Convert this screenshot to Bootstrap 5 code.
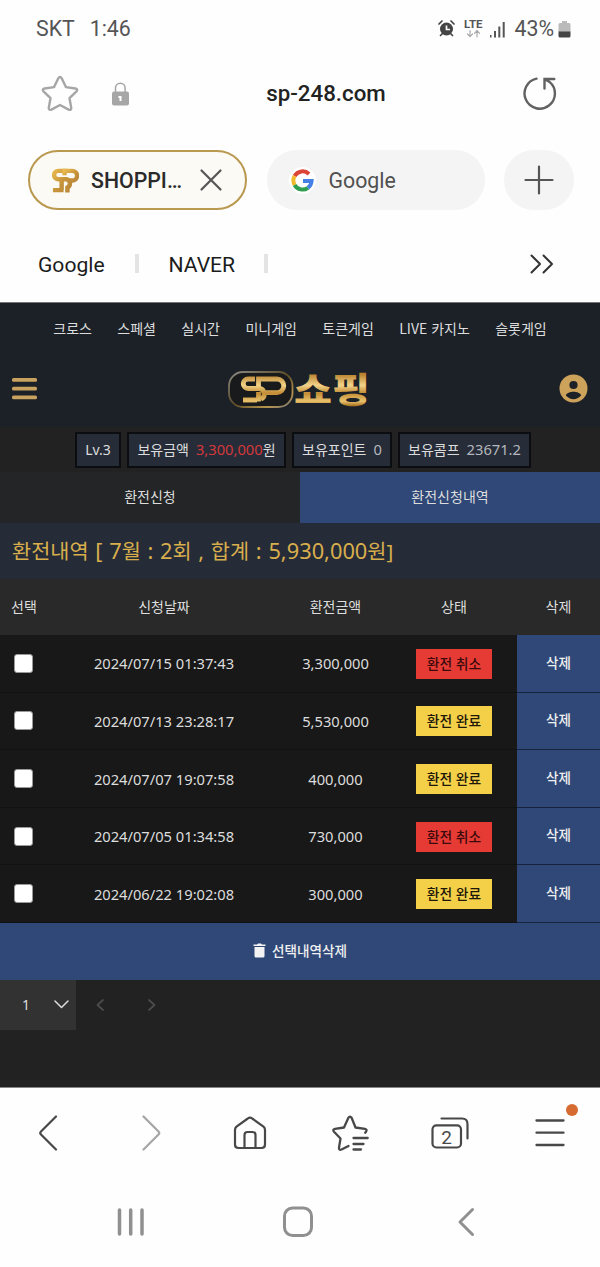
<!DOCTYPE html>
<html lang="ko">
<head>
<meta charset="utf-8">
<meta name="viewport" content="width=device-width, initial-scale=1">
<title>SP 쇼핑</title>
<link href="https://cdn.jsdelivr.net/npm/bootstrap@5.3.0/dist/css/bootstrap.min.css" rel="stylesheet">
<style>
body{width:600px;height:1267px;overflow:hidden;background:#fefefe;font-family:Roboto,"Noto Sans CJK KR",sans-serif;color:#222;line-height:1.2}
svg{display:block;flex:none}
.ln{fill:none;stroke:currentColor;stroke-linecap:round;stroke-linejoin:round}
.status-bar{height:56px;padding:1px 29px 0 36px;font-size:21.3px;color:#555}
.url-bar{height:74px;padding:1px 42px 0 41px;font-size:22.3px}
.tab-strip{height:100px;padding:0 26px 0 28px;font-size:21.3px}
.tab-pill{height:60px;border-radius:30px;background:#f4f4f4;width:218px}
.tab-pill.current{border:2px solid #b9984f;background:#fcfaf5;width:219px}
.tab-new{width:70px;height:60px;border-radius:35px;background:#f4f4f4;color:#555}
.marks{height:72px;padding:0 46px 5px 38px;font-size:21.1px;color:#1c1c1c}
.sep{width:4px;height:19px;background:#e4e4e4}
.site{height:786px;background:#222;color:#ddd;font-family:"Noto Sans","Noto Sans CJK KR",sans-serif;border-top:1px solid #777;border-bottom:1px solid #888;font-size:14px}
.site-head{height:124px;background:#1c2128}
.site-nav{height:50px;gap:25.400px;font-family:"Noto Sans CJK KR",sans-serif}
.brand{padding:0 12px;height:71px}
.num{font-family:"Noto Sans",sans-serif;font-size:14.7px}
.info{height:45px;gap:6px;padding:1px 0 0 6px}
.chip{height:36px;border:2px solid #0b0d11;background:#262c38;white-space:nowrap}
.chip .num{color:#b4b7bd}
.chip .hot{color:#d3383b}
.switch{height:51px}
.switch .on{background:#2f4878}
.switch .off{background:#232526}
.summary{height:56px;background:#252c38;color:#d9ae4c;font-size:20.8px;padding:1px 0 0 12px;white-space:pre;word-spacing:1.200px}
.summary .num{font-size:21.8px}
.log{table-layout:fixed;margin:0;border-collapse:separate;border-spacing:0;text-align:center;line-height:1}
.log th{height:56px;background:#292929;font-weight:400;padding:0;vertical-align:middle}
.log td{height:57.6px;background:#181818;border-bottom:1px solid #101216;padding:1px 0 0;vertical-align:middle}
.log td.del{background:#2f4878;border-bottom-color:#15233c;color:#f0f0f0;font-weight:500;font-size:13.5px;padding-bottom:1px}
.log .form-check-input{width:19px;height:19px;border:1px solid #999;border-radius:3px;background:#fff;display:block;margin:0 auto 1px 14px}
.state{display:inline-flex;align-items:center;justify-content:center;width:76px;height:30px;background:#f4cf48;color:#1d1808;font-weight:500;font-size:13.8px}
.state.cancel{background:#e63b35;color:#3c0a0b}
.wipe{height:57px;background:#2f4878;color:#f0f0f0;font-size:13.6px;font-weight:500;gap:6px;padding-bottom:1px}
.pager{height:50px}
.pager .sel{width:76px;background:#323232;padding:0 7px 0 22px}
.tools{height:90px;color:#484848}
.sys{height:87px;color:#909090}
.dot{position:absolute;left:31px;top:-14px;width:12px;height:12px;border-radius:50%;background:#d66b31}
</style>
</head>
<body>
<div class="status-bar d-flex align-items-center">
  <span>SKT</span><span style="margin-left:15px">1:46</span>
  <svg class="ms-auto" width="17" height="17" viewBox="0 0 17 17"><path d="M2.500 15.500l2-2M14.500 15.500l-2-2M1 4l3-3M16 4l-3-3" stroke="#444" stroke-width="1.700" stroke-linecap="round"/><circle cx="8.500" cy="9" r="6.500" fill="#444"/><path d="M8.500 5.500V9.500H12" stroke="#fff" stroke-width="1.700" fill="none"/></svg>
  <svg style="margin-left:9px" width="19" height="19" viewBox="0 0 19 19"><text x="0" y="8.800" font-family="Roboto" font-weight="700" font-size="11" fill="#555" textLength="18.500" lengthAdjust="spacingAndGlyphs">LTE</text><path class="ln" style="color:#aaa" stroke-width="1.200" d="M6 11.500v6M3.500 15l2.500 2.700L8.500 15M13 18v-6M10.500 14.300L13 11.500l2.500 2.800"/></svg>
  <svg style="margin-left:7px" width="15" height="18" viewBox="0 0 15 18" fill="#555"><path d="M0 15h1.500v2.500H0zM4 11h2v6.500H4zM8.300 6.500h2v11h-2zM12.700 2h2v15.500h-2z"/></svg>
  <span style="margin-left:9px">43%</span>
  <svg style="margin-left:4px" width="13" height="18" viewBox="0 0 13 18"><path d="M4 1h5v2h2a1.500 1.500 0 0 1 1.500 1.500V12H.500V4.500A1.500 1.500 0 0 1 2 3h2z" fill="#bbb"/><path d="M.500 11.500h12V16a1.500 1.500 0 0 1-1.500 1.500H2A1.500 1.500 0 0 1 .500 16z" fill="#444"/></svg>
</div>

<div class="url-bar d-flex align-items-center">
  <svg width="38" height="38" viewBox="0 0 38 38" style="color:#a6a6a6"><path class="ln" stroke-width="2.400" d="M17.300 3.300q1.700-2.600 3.400 0l4.200 8.800 9.600 1.400q2.800.700 1 2.800l-7 6.800 1.700 9.600q.100 3-2.600 1.900L19 30l-8.600 4.600q-2.700 1-2.600-1.900l1.700-9.600-7-6.800q-1.800-2.100 1-2.800l9.600-1.400z"/></svg>
  <svg style="margin-left:32px;color:#a6a6a6" width="19" height="24" viewBox="0 0 19 24"><path class="ln" stroke-width="1.500" d="M4.500 10V6a4.800 4.800 0 0 1 9.600 0v4"/><rect x="1" y="9.500" width="17" height="14" rx="2" fill="#a6a6a6"/><path d="M7.500 14h3v5H8.500v-3h-1z" fill="#fff"/></svg>
  <span class="mx-auto" style="font-weight:500">sp-248.com</span>
  <svg width="36" height="36" viewBox="0 0 36 36" style="color:#626262"><path fill="none" stroke="currentColor" stroke-width="2.400" stroke-linecap="round" d="M14.500 2.600A15.200 15.200 0 1 0 27.500 5.800M22.500 12.500V3H32.300M22.800 3.200L28 6.300"/></svg>
</div>

<div class="tab-strip d-flex align-items-center justify-content-between">
  <div class="tab-pill current d-flex align-items-center">
    <svg style="margin-left:22px" width="27" height="29" viewBox="0 0 28 29"><defs><linearGradient id="g1" x1="0" y1="0" x2="1" y2="1"><stop offset="0" stop-color="#e8b94f"/><stop offset=".500" stop-color="#c8953c"/><stop offset="1" stop-color="#b98738"/></linearGradient></defs><g fill="none" stroke="url(#g1)" stroke-width="4.600"><path d="M16 4.500H6.500a4.300 4.300 0 0 0 0 8.700H15a4.500 4.500 0 0 1 1 8.500V27M1 24.500h11M10 24V15"/><path d="M13 9V4.500h8a4.800 4.800 0 0 1 0 10h-5"/></g></svg>
    <span style="font-weight:500;margin-left:12px;width:91px;white-space:nowrap;color:#2a2a2a;padding-top:2px">SHOPPI…</span>
    <svg style="margin-left:17px;color:#555" width="24" height="24" viewBox="0 0 24 24"><path class="ln" stroke-width="2.200" d="M2.500 2.500l19 19M21.500 2.500l-19 19"/></svg>
  </div>
  <div class="tab-pill d-flex align-items-center">
    <svg style="margin-left:22px" width="27" height="27" viewBox="0 0 27 27"><circle cx="13.500" cy="13.500" r="13.500" fill="#fff"/><g fill="none" stroke-width="4"><path d="M20 7A9.200 9.200 0 0 0 5.600 9" stroke="#dc4437"/><path d="M5.600 9a9.200 9.200 0 0 0 0 9" stroke="#f2b92a"/><path d="M5.600 18A9.200 9.200 0 0 0 19 20.800" stroke="#2f9e4e"/><path d="M19 20.800a9.200 9.200 0 0 0 3.600-6.800H14" stroke="#4580e6"/></g></svg>
    <span style="margin-left:13px;color:#505050;padding-top:2px">Google</span>
  </div>
  <div class="tab-new d-flex align-items-center justify-content-center"><svg width="30" height="30" viewBox="0 0 30 30"><path class="ln" stroke-width="2.200" d="M15 1.500v27M1.500 15h27"/></svg></div>
</div>

<div class="marks d-flex align-items-center">
  <span style="padding-top:2px">Google</span><i class="sep" style="margin-left:30px"></i>
  <span style="margin-left:30px;padding-top:2px">NAVER</span><i class="sep" style="margin-left:29px"></i>
  <svg class="ms-auto" width="24" height="20" viewBox="0 0 24 20" style="color:#333"><path class="ln" stroke-width="2" d="M1.500 1.500L10 10l-8.500 8.500M13.500 1.500L22 10l-8.500 8.500"/></svg>
</div>

<main class="site">
  <header class="site-head">
    <nav class="site-nav d-flex align-items-center justify-content-center"><span>크로스</span><span>스페셜</span><span>실시간</span><span>미니게임</span><span>토큰게임</span><span>LIVE 카지노</span><span>슬롯게임</span></nav>
    <div class="brand d-flex align-items-center justify-content-between">
      <svg width="26" height="24" viewBox="0 0 26 24"><g fill="#c9a260"><rect y="1" width="25" height="3.800" rx="1.500"/><rect y="9.700" width="25" height="3.800" rx="1.500"/><rect y="18.400" width="25" height="3.800" rx="1.500"/></g></svg>
      <svg width="144" height="60" viewBox="-1 -11 144 60"><defs><linearGradient id="g2" x1="0" y1="0" x2="1" y2="1"><stop offset="0" stop-color="#8b8b86"/><stop offset=".500" stop-color="#5d4c27"/><stop offset=".800" stop-color="#b7954d"/><stop offset="1" stop-color="#777"/></linearGradient><linearGradient id="g3" gradientUnits="userSpaceOnUse" x1="0" y1="4" x2="0" y2="36"><stop offset="0" stop-color="#b7802b"/><stop offset=".350" stop-color="#f3d489"/><stop offset=".600" stop-color="#c28b34"/><stop offset=".850" stop-color="#e9c26d"/><stop offset="1" stop-color="#a8701f"/></linearGradient></defs>
        <rect x="1" y="2" width="63.500" height="35" rx="14" fill="#191a1b" stroke="url(#g2)" stroke-width="1.800"/>
        <g fill="none" stroke="url(#g3)" stroke-width="4.800"><path d="M27 9H20a4.500 4.500 0 0 0 0 9.500H31a5.500 5.500 0 0 1 2 10.500M15 30h14M30.500 22v9.500"/><path d="M30.500 18V9H49a6.800 6.800 0 0 1 0 13.600H38"/></g>
        <text x="66" y="32.500" font-family="Noto Sans CJK KR" font-weight="900" font-size="35" textLength="76" lengthAdjust="spacingAndGlyphs" fill="url(#g3)">쇼핑</text></svg>
      <svg width="29" height="29" viewBox="0 0 29 29"><circle cx="14.500" cy="14.500" r="14" fill="#cda25a"/><circle cx="14.500" cy="11" r="4.100" fill="#1c2128"/><path d="M6.800 21.500c1.700-5 13.700-5 15.400 0q-3.500 3.700-7.700 3.700t-7.700-3.700z" fill="#1c2128"/></svg>
    </div>
  </header>
  <div class="info d-flex align-items-center justify-content-center">
    <div class="chip d-flex align-items-center justify-content-center" style="width:46px">Lv.3</div>
    <div class="chip d-flex align-items-center justify-content-center" style="width:159px">보유금액<span class="num hot" style="margin-left:7px">3,300,000</span>원</div>
    <div class="chip d-flex align-items-center justify-content-center" style="width:100px">보유포인트<span class="num" style="margin-left:7px">0</span></div>
    <div class="chip d-flex align-items-center justify-content-center" style="width:133px">보유콤프<span class="num" style="margin-left:7px">23671.2</span></div>
  </div>
  <div class="switch row g-0 text-center">
    <div class="off col-6 d-flex align-items-center justify-content-center">환전신청</div>
    <div class="on col-6 d-flex align-items-center justify-content-center">환전신청내역</div>
  </div>
  <div class="summary d-flex align-items-center"><div>환전내역 <span class="num">[ 7</span>월 <span class="num">: 2</span>회 <span class="num">,</span> 합계 <span class="num">: 5,930,000</span>원]</div></div>
  <table class="log w-100">
    <colgroup><col style="width:48px"><col style="width:232px"><col style="width:111px"><col style="width:126px"><col style="width:83px"></colgroup>
    <thead><tr><th>선택</th><th>신청날짜</th><th>환전금액</th><th>상태</th><th>삭제</th></tr></thead>
    <tbody>
      <tr><td><input class="form-check-input" type="checkbox"></td><td class="num">2024/07/15 01:37:43</td><td class="num">3,300,000</td><td><span class="state cancel">환전 취소</span></td><td class="del">삭제</td></tr>
      <tr><td><input class="form-check-input" type="checkbox"></td><td class="num">2024/07/13 23:28:17</td><td class="num">5,530,000</td><td><span class="state">환전 완료</span></td><td class="del">삭제</td></tr>
      <tr><td><input class="form-check-input" type="checkbox"></td><td class="num">2024/07/07 19:07:58</td><td class="num">400,000</td><td><span class="state">환전 완료</span></td><td class="del">삭제</td></tr>
      <tr><td><input class="form-check-input" type="checkbox"></td><td class="num">2024/07/05 01:34:58</td><td class="num">730,000</td><td><span class="state cancel">환전 취소</span></td><td class="del">삭제</td></tr>
      <tr><td><input class="form-check-input" type="checkbox"></td><td class="num">2024/06/22 19:02:08</td><td class="num">300,000</td><td><span class="state">환전 완료</span></td><td class="del">삭제</td></tr>
    </tbody>
  </table>
  <div class="wipe d-flex align-items-center justify-content-center"><svg width="13" height="15" viewBox="0 0 13 15" fill="#f4f4f4"><path d="M.500 1.500H4L5 .500h3l1 1h3.500V3H.500zM1.500 4h10v9a1.500 1.500 0 0 1-1.500 1.500H3A1.500 1.500 0 0 1 1.500 13z"/></svg><span>선택내역삭제</span></div>
  <div class="pager d-flex">
    <div class="sel d-flex align-items-center justify-content-between"><span class="num" style="font-size:14px">1</span><svg width="15" height="9" viewBox="0 0 15 9"><path class="ln" stroke-width="1.500" d="M1 1l6.500 6.500L14 1"/></svg></div>
    <div class="d-flex align-items-center" style="color:#4c4c4c;padding-left:20px;gap:44px"><svg width="8" height="12" viewBox="0 0 8 12"><path class="ln" stroke-width="1.700" d="M7 1L1.500 6 7 11"/></svg><svg width="8" height="12" viewBox="0 0 8 12"><path class="ln" stroke-width="1.700" d="M1 1l5.500 5L1 11"/></svg></div>
  </div>
</main>

<div class="tools row row-cols-6 g-0 align-items-center">
  <div class="col d-flex justify-content-center"><svg class="me-1" width="20" height="36" viewBox="0 0 20 36"><path class="ln" stroke-width="2.200" d="M18 1.500L3 16.500q-1.500 1.500 0 3L18 34.500"/></svg></div>
  <div class="col d-flex justify-content-center" style="color:#a5a5a5"><svg class="ms-1" width="20" height="36" viewBox="0 0 20 36"><path class="ln" stroke-width="2.200" d="M1.500 1.500l15 15q1.500 1.500 0 3l-15 15"/></svg></div>
  <div class="col d-flex justify-content-center"><svg width="34" height="34" viewBox="0 0 34 34"><path class="ln" stroke-width="2.200" d="M2 14q0-2 1.500-3.300L14.800 2.500q2.200-1.700 4.400 0l11.300 8.200q1.500 1.300 1.500 3.300v14.500q0 3.500-3.500 3.500h-23q-3.500 0-3.500-3.500zM11.500 32V19q0-3 3-3h5q3 0 3 3v13"/></svg></div>
  <div class="col d-flex justify-content-center"><svg width="37" height="36" viewBox="0.5 0 37 36"><path class="ln" stroke-width="2.300" d="M17 31l-7 3.500q-2.700 1-2.500-1.800L9 23.500 2.500 16.700q-1.800-2 1-2.800l9-1.400L16.800 3q1.700-2.600 3.400 0L24 12.500l9.500 1.400q2.500.700 1 2.800l-.800 1M22 23H36.200M22 29h10M22 34.500h7.500"/></svg></div>
  <div class="col d-flex justify-content-center"><svg width="38" height="32" viewBox="0 0 38 32"><path class="ln" stroke-width="2.200" d="M10.500 1.500H31q5.500 0 5.500 5.500v14.500"/><rect class="ln" stroke-width="2.200" x="1.500" y="8.300" width="28.500" height="22.200" rx="4"/><text x="15.700" y="26.500" text-anchor="middle" font-family="Roboto" font-size="19" fill="#484848">2</text></svg></div>
  <div class="col d-flex justify-content-center"><div class="position-relative"><svg width="30" height="30" viewBox="0 0 30 30"><path class="ln" stroke-width="2.300" d="M1.500 2.500h27M1.500 14.700h27M1.500 27h27"/></svg><span class="dot"></span></div></div>
</div>
<div class="sys d-flex align-items-center" style="padding-left:117px">
  <svg width="28" height="30" viewBox="0 0 28 30"><path class="ln" stroke-width="3.500" d="M2.500 3v24M13.700 3v24M25 3v24"/></svg>
  <svg style="margin-left:137px" width="32" height="32" viewBox="0 0 32 32"><rect class="ln" stroke-width="3" x="2.500" y="2" width="27" height="27.500" rx="8"/></svg>
  <svg style="margin-left:143px" width="18" height="30" viewBox="0 0 18 30"><path class="ln" stroke-width="3" d="M15.500 2.500L3 15l12.500 12.500"/></svg>
</div>
<script src="https://cdn.jsdelivr.net/npm/bootstrap@5.3.0/dist/js/bootstrap.bundle.min.js"></script>
</body>
</html>
